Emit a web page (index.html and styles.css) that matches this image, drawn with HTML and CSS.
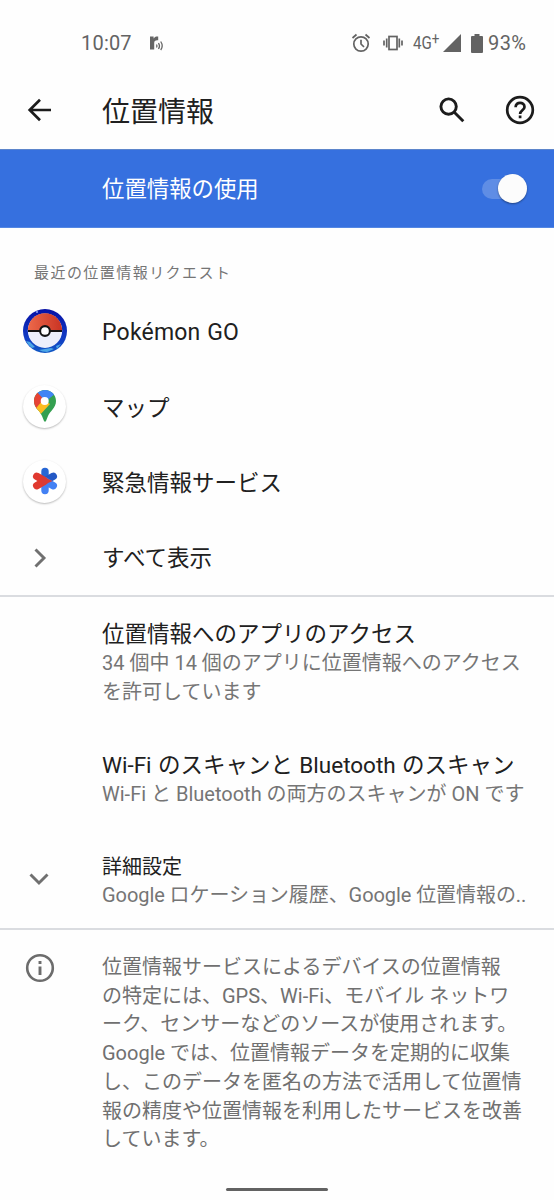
FILE: index.html
```html
<!DOCTYPE html>
<html lang="ja">
<head>
<meta charset="utf-8">
<title>位置情報</title>
<link rel="stylesheet" href="styles.css">
</head>
<body>
<div class="screen">
  <div class="status">
    <span class="time">10:07</span>
    <svg class="notif" width="16" height="18" viewBox="0 0 16 18"><path d="M1 2.500h3.600v2C5.600 2.800 7 2.200 9.200 2.500v3.800C6.400 6 5.200 7 5.200 9v6.500H1z" fill="#666"/><path d="M7.500 10.500q1 1.500 0 3M9.500 9q2 3 0 6M11.700 7.500q3 4.500 0 8.500" fill="none" stroke="#666" stroke-width="1.300"/></svg>
    <span class="grow"></span>
    <svg class="alarm" width="20" height="20" viewBox="0 0 20 20" fill="none" stroke="#636363" stroke-width="1.700"><circle cx="10" cy="11" r="7.200"/><path d="M10 6.800V11l3 3M1.500 5l4-3.500M18.500 5l-4-3.500"/></svg>
    <svg class="vibrate" width="20" height="16" viewBox="0 0 20 16" fill="none" stroke="#636363" stroke-width="1.700"><rect x="6" y="1.500" width="8" height="13"/><path d="M3.700 3.500v9M1 5.500v5M16.300 3.500v9M19 5.500v5"/></svg>
    <span class="net"><span class="narrow">4G<sup>+</sup></span></span>
    <svg class="signal" width="18" height="18" viewBox="0 0 18 18"><path d="M18 0v18H0z" fill="#636363"/></svg>
    <svg class="battery" width="12" height="19" viewBox="0 0 12 19"><path d="M3.500 0h5v2H11q1 0 1 1v15q0 1-1 1H1q-1 0-1-1V3q0-1 1-1h2.500z" fill="#636363"/></svg>
    <span class="percent">93%</span>
  </div>

  <header class="appbar">
    <div class="lead"><svg width="24" height="24" viewBox="0 0 24 24" fill="none" stroke="#1c1c1c" stroke-width="2.700"><path d="M24 12H3M13 1.700L2.700 12 13 22.300"/></svg></div>
    <h1>位置情報</h1>
    <svg class="search" width="26" height="26" viewBox="0 0 26 26" fill="none" stroke="#1c1c1c" stroke-width="2.900"><circle cx="9.600" cy="9.600" r="7.700"/><path d="M15.300 15.300l9 9"/></svg>
    <svg class="help" width="30" height="30" viewBox="0 0 30 30" fill="none" stroke="#1c1c1c" stroke-width="2.700"><circle cx="15" cy="15" r="12.800"/><path d="M10.600 12.200c0-6 8.900-5.600 8.900-.3 0 3.300-4.400 3.600-4.400 7.200M15.100 20.600v2.700"/></svg>
  </header>

  <div class="banner">
    <span class="label">位置情報の使用</span>
    <span class="switch"><span class="thumb"></span></span>
  </div>

  <section class="recent">
    <h2>最近の位置情報リクエスト</h2>
    <div class="row">
      <div class="lead"><svg class="appicon" width="46" height="46" viewBox="0 0 46 46">
        <defs><linearGradient id="rim" x1="0" y1="0" x2="0" y2="1"><stop offset="0" stop-color="#0710a5"/><stop offset=".65" stop-color="#103bc4"/><stop offset="1" stop-color="#1259c4"/></linearGradient><linearGradient id="red" x1="0" y1="0" x2="1" y2="0"><stop offset="0" stop-color="#ed694a"/><stop offset="1" stop-color="#c93323"/></linearGradient></defs>
        <circle cx="23" cy="23" r="22" fill="url(#rim)"/><path d="M4 33l4 1 5 5-3 1q-4-3-6-7M17 42l12-2 3 1-7 3q-5 0-8-2M34 38l5-2-4 5z" fill="#4ba5e6"/>
        <circle cx="23" cy="22.700" r="17.200" fill="#eceffb"/><path d="M5.800 22.500a17.200 17.200 0 0 1 34.400 0z" fill="url(#red)"/>
        <path d="M6 23h34" stroke="#151515" stroke-width="2"/><circle cx="23" cy="23" r="4.900" fill="#fff" stroke="#151515" stroke-width="2.100"/><circle cx="15" cy="4" r="1" fill="#91a8ff"/></svg></div>
      <span class="title latin">Pokémon GO</span>
    </div>
    <div class="row">
      <div class="lead"><span class="disc"><svg width="24" height="34" viewBox="0 0 24 34">
        <defs><clipPath id="pin"><path d="M12 1C5.500 1 1 6 1 12c0 7 5.500 9 8 15l2 5q1 1.400 2 0l2-5c2-5 8-8 8-15C23 6 18.500 1 12 1z"/></clipPath></defs>
        <g clip-path="url(#pin)"><path d="M0 0h24v34H0z" fill="#34a050"/><path d="M4 3L16-1l7 5-11 9z" fill="#4285f4"/><path d="M0 0l4 3 8 9L0 25z" fill="#e64335"/><path d="M0 23l9-11 3 0 5 3L5 28z" fill="#fbbc20"/></g><circle cx="11.700" cy="12" r="4" fill="#fff"/></svg></span></div>
      <span class="title">マップ</span>
    </div>
    <div class="row">
      <div class="lead"><span class="disc"><svg width="28" height="30" viewBox="0 0 28 30" fill="none" stroke-linecap="round" stroke-width="7.400">
        <path d="M14 15V5.500" stroke="#2867d5"/><path d="M14 15l8.300-4.700" stroke="#2459c5"/><path d="M14 15v9.500M14 15l8.300 4.700" stroke="#4381f4"/><path d="M13 14.500L5.700 10.300M13 15.500l-7.300 4.200" stroke="#e0392f"/><path d="M11 10.200L21.500 15 11 19.800z" fill="#d83b36"/></svg></span></div>
      <span class="title">緊急情報サービス</span>
    </div>
    <div class="row">
      <div class="lead"><svg width="14" height="22" viewBox="0 0 14 22" fill="none" stroke="#707070" stroke-width="2.900"><path d="M2.500 2.500L11 11l-8.500 8.500"/></svg></div>
      <span class="title">すべて表示</span>
    </div>
  </section>

  <section class="options">
    <div class="item access">
      <div class="title">位置情報へのアプリのアクセス</div>
      <div class="summary">34 個中 14 個のアプリに位置情報へのアクセス<br>を許可しています</div>
    </div>
    <div class="item scan">
      <div class="title">Wi-Fi のスキャンと Bluetooth のスキャン</div>
      <div class="summary">Wi-Fi と Bluetooth の両方のスキャンが ON です</div>
    </div>
    <div class="advanced">
      <div class="lead"><svg width="22" height="14" viewBox="0 0 22 14" fill="none" stroke="#707070" stroke-width="2.900"><path d="M2.500 2.500L11 11l8.500-8.500"/></svg></div>
      <div>
        <div class="title small">詳細設定</div>
        <div class="summary tight">Google ロケーション履歴、Google 位置情報の..</div>
      </div>
    </div>
  </section>

  <footer class="info">
    <div class="lead"><svg width="30" height="30" viewBox="0 0 30 30" fill="none" stroke="#6c6c6c" stroke-width="2.600"><circle cx="15" cy="15" r="12.800"/><path d="M15 13.500V22M15 8v3" stroke-width="2.900"/></svg></div>
    <p class="summary">位置情報サービスによるデバイスの位置情報<br>の特定には、GPS、Wi-Fi、モバイル ネットワ<br>ーク、センサーなどのソースが使用されます。<br>Google では、位置情報データを定期的に収集<br>し、このデータを匿名の方法で活用して位置情<br>報の精度や位置情報を利用したサービスを改善<br>しています。</p>
  </footer>
  <div class="navbar"><span class="pill"></span></div>
</div>
</body>
</html>
```
FILE: styles.css
```css
* { box-sizing: border-box; }
body { margin: 0; background: #fff; }
svg { display: block; flex: none; }
.screen {
  width: 554px;
  height: 1200px;
  display: flex;
  flex-direction: column;
  overflow: hidden;
  background: #fefefe;
  color: #202020;
  font-family: Roboto, "Noto Sans CJK JP", sans-serif;
  font-weight: 400;
  white-space: nowrap;
}
.status {
  height: 70px;
  padding: 16px 27px 0 81px;
  display: flex;
  align-items: center;
  color: #636363;
  font-size: 20px;
}
.time { width: 68px; letter-spacing: .2px; }
.grow { flex: 1; }
.vibrate { margin-left: 12px; }
.net { margin-left: 10px; width: 30px; font-size: 18px; line-height: 20px; }
.narrow { display: inline-block; transform: scaleX(.84); transform-origin: left; }
.net sup { font-size: 16px; line-height: 0; vertical-align: 5px; }
.battery { margin: 0 5px 0 10px; }
.percent { width: 39px; letter-spacing: .4px; }
.lead { width: 102px; flex: none; display: flex; }
.appbar { height: 79px; display: flex; align-items: center; padding-right: 19px; }
.appbar .lead { padding-left: 27px; }
h1 { margin: 6px 0 0; flex: 1; font-size: 28px; font-weight: 400; line-height: 40px; }
.search { margin-right: 40px; }
.banner {
  height: 79px;
  padding: 0 27px 0 102px;
  display: flex;
  align-items: center;
  justify-content: space-between;
  background: #3670df;
  border-top: 1px solid #5d85cb;
  border-bottom: 1px solid #5487e3;
  color: #fff;
  font-size: 22.4px;
}
.label { padding-bottom: 3px; }
.switch { width: 45px; height: 20px; border-radius: 10px; background: #5f8de5; display: flex; align-items: center; justify-content: flex-end; }
.thumb { width: 29px; height: 29px; border-radius: 50%; background: #fcfcfc; box-shadow: 0 1px 2px #0006; flex: none; }
.recent { height: 369px; border-bottom: 2px solid #dadce0; }
h2 { margin: 0; height: 67px; padding: 33px 0 0 34px; font-size: 15px; line-height: 24px; letter-spacing: 1.45px; font-weight: 400; color: #757575; }
.row { height: 75px; display: flex; align-items: center; }
.row .lead > svg { margin-left: 33px; }
.row .lead > .appicon { margin: 0 0 3px 22px; }
.disc { width: 43px; height: 43px; margin: 0 0 3px 23px; border-radius: 50%; background: #fff; box-shadow: 0 1px 2px #0004; display: flex; align-items: center; justify-content: center; }
.title { font-size: 22.5px; line-height: 30px; word-spacing: .8px; }
.latin { font-size: 23px; letter-spacing: .2px; }
.summary { font-size: 20px; line-height: 28.7px; color: #757575; }
.tight { letter-spacing: -.07px; }
.title.small { font-size: 20px; line-height: 28px; }
.options { height: 333px; padding-top: 22px; border-bottom: 2px solid #dadce0; }
.item { padding-left: 102px; }
.access { height: 131px; }
.scan { height: 103px; }
.advanced { display: flex; }
.advanced .lead { padding: 19px 0 0 28px; }
.info { display: flex; height: 240px; padding-top: 23px; }
.info .lead { padding: 0 0 0 25px; }
.info .summary { margin: 0; color: #707070; }
.navbar { flex: 1; display: flex; justify-content: center; align-items: flex-end; padding-bottom: 9px; }
.pill { width: 102px; height: 3px; border-radius: 2px; background: #626262; }
```
